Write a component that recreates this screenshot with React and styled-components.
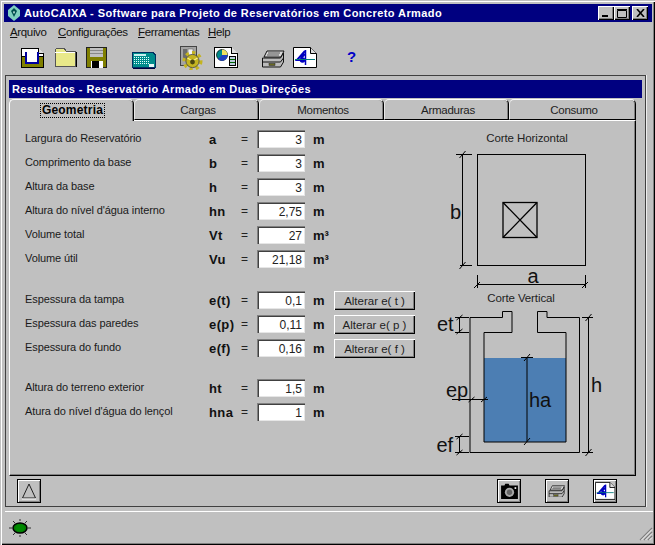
import React from "react";
import styled, { createGlobalStyle } from "styled-components";

const Global = createGlobalStyle`
  html, body { margin: 0; padding: 0; background: #c0c0c0; }
  body { font-family: "Liberation Sans", Arial, sans-serif; font-size: 11px; color: #000; }
`;

const Win = styled.div`
  width: 655px; height: 545px; box-sizing: border-box; padding: 4px 3px 0 4px;
  background: #c0c0c0; overflow: hidden; display: flex; flex-direction: column;
  box-shadow: inset 1px 1px 0 #c0c0c0, inset 2px 2px 0 #fff, inset -1px -1px 0 #000, inset -2px -2px 0 #808080;
`;
const TitleBar = styled.div`
  height: 18px; flex: none; background: #000080; color: #fff; display: flex; align-items: center;
  padding: 0 4px 0 3px; gap: 3px; font-weight: 700; font-size: 11px; letter-spacing: 0.42px;
`;
const TitleText = styled.span`flex: 1; white-space: nowrap;`;
const WinControls = styled.div`display: flex;`;
const WinBtn = styled.div`
  width: 16px; height: 14px; box-sizing: border-box; background: #c0c0c0; display: flex; align-items: center; justify-content: center;
  margin-left: ${p => p.$gap || 0}px;
  box-shadow: inset 1px 1px 0 #fff, inset -1px -1px 0 #000, inset -2px -2px 0 #808080;
`;
const MenuBar = styled.div`height: 20px; flex: none; display: flex; align-items: center; padding-left: 6px; color: #111;`;
const MenuItem = styled.span`
  width: ${p => p.$w}px; white-space: nowrap; font-size: 11.5px; letter-spacing: -0.35px;
  u { text-underline-offset: 1px; }
`;
const ToolBar = styled.div`height: 33px; flex: none; display: flex; align-items: flex-start; padding-top: 3px; box-sizing: border-box;`;
const ToolSlot = styled.div`margin-left: ${p => p.$ml}px; margin-top: ${p => p.$mt || 0}px; display: flex; flex: none;`;
const Help = styled.span`color: #0000c8; font: 700 15px "Liberation Sans", sans-serif; margin-left: 30px; margin-top: 3px;`;

const Workspace = styled.div`
  margin-left: 1px; width: 641px; height: 432px; flex: none; box-sizing: border-box;
  border: 1px solid #404040; box-shadow: 1px 0 0 #eee; padding: 4px 0 0 3px; display: flex; flex-direction: column;
`;
const ChildTitle = styled.div`
  height: 18px; width: 633px; flex: none; background: #000080; color: #fff; display: flex; align-items: center;
  padding-left: 3px; box-sizing: border-box; font-weight: 700; font-size: 11px; letter-spacing: 0.41px; white-space: nowrap;
`;
const Tabs = styled.div`display: flex; margin-top: 1px; height: 21px; flex: none; position: relative; z-index: 1;`;
const Tab = styled.div`
  width: ${p => p.$w}px; box-sizing: border-box; height: ${p => (p.$active ? 22 : 21)}px; flex: none;
  display: flex; align-items: center; justify-content: center; background: #c0c0c0;
  padding-left: ${p => (p.$active ? 2 : 3)}px;
  border-radius: 5px 5px 0 0; font-size: 11.5px; letter-spacing: -0.25px; color: #222;
  border-top: 1px solid #fff; border-left: 1px solid ${p => (p.$active ? "#fff" : "#e8e8e8")};
  border-right: 1px solid #000; border-bottom: ${p => (p.$active ? "0" : "1px solid #000")};
  box-shadow: inset -1px 0 0 #808080;
`;
const TabFocus = styled.span`
  outline: 1px dotted #000; outline-offset: 0; font-weight: 700; font-size: 12px; letter-spacing: 0.2px; color: #000; padding: 0 1px; line-height: 13px;
`;
const Panel = styled.div`
  width: 627px; height: 356px; flex: none; box-sizing: border-box; display: flex; background: #c0c0c0;
  border-top: 1px solid #fff; border-left: 1px solid #fff; border-right: 1px solid #000; border-bottom: 1px solid #000;
  box-shadow: inset -1px -1px 0 #808080;
`;
const Form = styled.div`width: 420px; flex: none; box-sizing: border-box; padding: 9px 0 0 15px; display: flex; flex-direction: column;`;
const Group = styled.div`display: flex; flex-direction: column; gap: 6px; margin-bottom: ${p => p.$mb || 0}px;`;
const Row = styled.div`display: grid; grid-template-columns: 184px 32px 16px 48px 29px 81px; height: 18px; align-items: center;`;
const Label = styled.span`padding-bottom: 3px; font-size: 11px; letter-spacing: -0.1px; white-space: nowrap; color: #1a1a1a;`;
const Sym = styled.span`font-weight: 700; font-size: 13px; letter-spacing: 0.4px; white-space: nowrap; color: #111;`;
const Eq = styled.span`font-size: 12px; color: #222;`;
const Field = styled.input`
  width: 48px; height: 18px; box-sizing: border-box; border: 0; margin: 0; padding: 2px 3px 0 0; text-align: right;
  font: 12px "Liberation Sans", sans-serif; background: #fff; color: #222; outline: none;
  box-shadow: inset 1px 1px 0 #808080, inset 2px 2px 0 #404040, inset -1px -1px 0 #e6e6e6;
`;
const Unit = styled.span`padding-left: 8px; font-weight: 700; font-size: 13px; color: #111;`;
const Btn = styled.button`
  width: 81px; height: 19px; padding: 0; border: 0; background: #c0c0c0; margin: 1px 0 0; font: 11.5px "Liberation Sans", sans-serif; color: #222;
  box-shadow: inset 1px 1px 0 #fff, inset -1px -1px 0 #000, inset -2px -2px 0 #808080;
`;
const Aside = styled.div`flex: 1; padding-top: 10px; display: flex; flex-direction: column; align-items: flex-start;`;
const Caption = styled.div`width: ${p => p.$w}px; height: 14px; line-height: 14px; text-align: center; font-size: 11.5px; letter-spacing: -0.1px; color: #222; white-space: nowrap; margin-top: ${p => p.$mt || 0}px;`;
const Drawing = styled.svg`display: block; flex: none; font-family: "Liberation Sans", sans-serif; margin-top: ${p => p.$mt || 0}px;`;

const Footer = styled.div`height: 30px; width: 627px; flex: none; padding-top: 3px; box-sizing: border-box; display: flex;`;
const FootBtn = styled.div`
  width: 24px; height: 24px; box-sizing: border-box; flex: none; display: flex; align-items: center; justify-content: center;
  margin-left: ${p => p.$ml}px; background: #c0c0c0;
  box-shadow: inset 0 0 0 1px #000, inset 1px 1px 0 1px #fff, inset -1px -1px 0 1px #808080;
`;
const StatusBar = styled.div`
  margin-top: 4px; margin-left: 1px; flex: 1; box-sizing: border-box; border-top: 1px solid #fff; display: flex; align-items: flex-start; justify-content: space-between;
  padding: 6px 0 2px 3px; margin-right: -1px;
`;
const Grip = styled.svg`align-self: flex-end; margin-bottom: 2px;`;

const Minimize = () => <svg width="8" height="8" viewBox="0 0 8 8"><rect x="0" y="6" width="6" height="2" fill="#000"/></svg>;
const Maximize = () => <svg width="10" height="9" viewBox="0 0 10 9"><path d="M.5 1.5h9v7h-9z" fill="none" stroke="#000"/><path d="M0 .5h10" stroke="#000"/></svg>;
const Close = () => <svg width="9" height="8" viewBox="0 0 9 8"><path d="M1 0l7 8M8 0L1 8" stroke="#000" strokeWidth="1.6"/></svg>;
const AppLogo = () => (
  <svg width="14" height="16" viewBox="0 0 14 16"><path d="M7 0l6 5v6l-6 5-6-5V5z" fill="#7fd0c0"/><path d="M7 3l3 3-3 6-3-6z" fill="#005050"/><path d="M7 6l1 1-1 2-1-2z" fill="#d0f0e8"/></svg>
);

const TrayIcon = () => (
  <svg width="24" height="21" viewBox="0 0 24 21" shapeRendering="crispEdges">
    <path d="M1 1h17l5 5v13H1z" fill="#fff" stroke="#000" strokeWidth="1"/>
    <path d="M18 1v5h5" fill="#ddd" stroke="#000"/>
    <path d="M1 9.5h5v6h12v-6h5V20H1z" fill="#808000" stroke="#000"/>
    <path d="M6 5v10.5h12V5" fill="none" stroke="#0000a0" strokeWidth="2"/>
  </svg>
);
const FolderIcon = () => (
  <svg width="23" height="20" viewBox="0 0 23 20" shapeRendering="crispEdges">
    <path d="M1 3l2-2h7l2 3h9.500v15H1z" fill="#e9e98a" stroke="#555"/>
    <path d="M22 5v15H2" fill="none" stroke="#000"/>
    <path d="M1 5h20" stroke="#fff"/>
  </svg>
);
const FloppyIcon = () => (
  <svg width="21" height="21" viewBox="0 0 21 21" shapeRendering="crispEdges">
    <path d="M.5.5h20v20H.5z" fill="#808000" stroke="#222"/>
    <rect x="4" y="1" width="13" height="9" fill="#c0c0c0"/>
    <path d="M4 3.500h13M4 6.500h13" stroke="#888"/>
    <rect x="5" y="14" width="12" height="7" fill="#fff"/>
    <rect x="6" y="14" width="7" height="7" fill="#000"/>
  </svg>
);
const CalcIcon = () => (
  <svg width="25" height="18" viewBox="0 0 25 18" shapeRendering="crispEdges">
    <path d="M2 1.500h20l2 2v13H1V3z" fill="#008c8c" stroke="#003060"/>
    <rect x="3" y="3" width="12" height="2" fill="#c8f0f0"/>
    {[6, 8, 10, 12].map(y => [3, 5, 7, 9, 11, 13, 15, 17].map(x => <rect key={`${x}-${y}`} x={x} y={y} width="1.4" height="1.4" fill="#e6ffff"/>))}
    <rect x="18" y="13" width="5" height="3" fill="#e8f8f8"/>
    <path d="M2 17.500h22" stroke="#000040"/>
  </svg>
);
const GearIcon = () => (
  <svg width="25" height="24" viewBox="0 0 25 24">
    <rect x="0.500" y="0.500" width="16" height="19" fill="#a4a4a4" stroke="#444"/>
    <rect x="8" y="3" width="5" height="13" fill="#f4f4f4" stroke="#666" strokeWidth=".6"/>
    <rect x="3" y="3" width="4" height="10" fill="#6c6c6c"/>
    <circle cx="12.500" cy="15" r="8.300" fill="none" stroke="#c4b420" strokeWidth="3.400" strokeDasharray="3.200 3.200"/>
    <circle cx="12.500" cy="15" r="6.600" fill="#c4b420" stroke="#444" strokeWidth=".8"/>
    <path d="M7.500 12l5 3 5-3" stroke="#f6f08a" strokeWidth="1.400" fill="none"/>
    <circle cx="12.500" cy="16" r="2.400" fill="#4a4610"/>
  </svg>
);
const ChartDocIcon = () => (
  <svg width="24" height="21" viewBox="0 0 24 21" shapeRendering="crispEdges">
    <path d="M.5.5h17l6 6v14H.5z" fill="#fff" stroke="#000"/>
    <path d="M17.500.5v6h6" fill="#ddd" stroke="#000"/>
    <g shapeRendering="auto">
      <circle cx="8" cy="8" r="5.500" fill="#008888" stroke="#000" strokeWidth=".7"/>
      <path d="M8 8V2.500A5.500 5.500 0 0 1 13.500 8z" fill="#f0e060"/>
      <path d="M8 8h5.500A5.500 5.500 0 0 1 4 12z" fill="#2040c0"/>
    </g>
    <rect x="15.500" y="9.500" width="6" height="9" fill="#bcd" stroke="#000"/>
    <path d="M16 12.500h5M16 15.500h5" stroke="#060"/>
  </svg>
);
const PrinterIcon = ({ s = 1 }) => (
  <svg width={24 * s} height={18 * s} viewBox="0 0 24 18">
    <path d="M6 1h17l-3 6H3z" fill="#d8d8d8" stroke="#111"/>
    <path d="M7 3h12M6 5h12" stroke="#333" strokeWidth=".8"/>
    <path d="M1.500 8h18l3-5v9l-3 5h-18z" fill="#bbb" stroke="#111"/>
    <path d="M1.500 12h18l3-4" fill="none" stroke="#111"/>
    <rect x="8" y="13.500" width="6" height="2" fill="#6a6a20" stroke="#222" strokeWidth=".5"/>
  </svg>
);
const DrawDocIcon = ({ s = 1 }) => (
  <svg width={24 * s} height={21 * s} viewBox="0 0 24 21">
    <path d="M.5.5h17l6 6v14H.5z" fill="#fff" stroke="#000"/>
    <path d="M17.500.5v6h6" fill="#ddd" stroke="#000"/>
    <path d="M12.500 3v15" stroke="#0000c0" strokeWidth="1.500"/>
    <path d="M12 4L4 13h8.500M8 11l4-4" fill="none" stroke="#0000c0" strokeWidth="2"/>
    <circle cx="9.500" cy="13" r="2.800" fill="#0000c0"/>
    <path d="M2 12.500h20" stroke="#007878"/>
  </svg>
);
const TriangleIcon = () => (
  <svg width="16" height="17" viewBox="0 0 16 17"><path d="M8 1L1.500 15h13z" fill="none" stroke="#222"/><path d="M1 16h14" stroke="#fff"/></svg>
);
const CameraIcon = () => (
  <svg width="17" height="16" viewBox="0 0 20 19">
    <path d="M0 3h4l1-2h4l1 2h10v16H0z" fill="#000"/>
    <circle cx="10" cy="11" r="5.500" fill="#a8a8a8"/>
    <circle cx="10" cy="11" r="3.200" fill="#666"/>
    <rect x="16" y="5" width="2" height="2" fill="#fff"/>
  </svg>
);
const Led = () => (
  <svg width="24" height="20" viewBox="0 0 24 20">
    <path d="M1 10h3M20 10h3M12 1v2M12 17v2M5 3l2 2M19 3l-2 2M5 17l2-2M19 17l-2-2" stroke="#222" strokeWidth=".9"/>
    <ellipse cx="12" cy="10" rx="7" ry="5" fill="#007a00" stroke="#000" strokeWidth="1.500"/>
    <ellipse cx="12" cy="10" rx="4.500" ry="3.500" fill="#008a00"/>
  </svg>
);

const L = ({ d, w = 1 }) => <path d={d} fill="none" stroke="#000" strokeWidth={w}/>;

const HorizontalCut = () => (
  <Drawing $mt={5} width="200" height="140" viewBox="430 150 200 140">
    <rect x="477.500" y="154.500" width="108" height="111" fill="none" stroke="#000" strokeWidth="1"/>
    <rect x="503" y="202.500" width="34" height="35" fill="none" stroke="#000" strokeWidth="1.300"/>
    <L d="M503 202.500l34 35M537 202.500l-34 35" w={1.300}/>
    <L d="M462.500 154v112M456 154.500h16M460 265.500h12M459.500 158l6-7M459.500 269l6-7"/>
    <L d="M477 284.500h109M477.500 275v13M585.500 275v13M474 288l6-6M582 288l6-6"/>
    <text x="450" y="219" fontSize="20" fill="#111">b</text>
    <text x="527.500" y="283" fontSize="20" fill="#111">a</text>
  </Drawing>
);
const VerticalCut = () => (
  <Drawing width="200" height="155" viewBox="430 305 200 155">
    <rect x="484" y="358" width="82" height="84" fill="#4c7eb3"/>
    <L d="M470 317.500h32.500v-6h9.500v21h-28v109.500h82V332.500h-28.500v-21h9.500v6h32.500v135H470z"/>
    <L d="M527 357.500v84M521 357.500h12M524 361l6-7M524 445l6-7"/>
    <L d="M588.500 317v135M582 317.500h11M582 452.500h11M585.500 321l6-7M585.500 456l6-7"/>
    <L d="M459.500 317v15M455 317.500h14M455 332.500h14M456.500 334l6-5M456.500 320l6-5"/>
    <L d="M459.500 436v16M455 436.500h14M455 452.500h14M456.500 455l6-5M456.500 439l6-5"/>
    <L d="M452 399.500h36M468.500 402l6-5M481 402l6-5"/>
    <text x="437" y="331" fontSize="20" fill="#111">et</text>
    <text x="436.500" y="452" fontSize="20" fill="#111">ef</text>
    <text x="446" y="397" fontSize="20" fill="#111">ep</text>
    <text x="529" y="407" fontSize="20" fill="#111">ha</text>
    <text x="591" y="392" fontSize="20" fill="#111">h</text>
  </Drawing>
);

const g1 = [
  ["Largura do Reservatório", "a", "3", "m"],
  ["Comprimento da base", "b", "3", "m"],
  ["Altura da base", "h", "3", "m"],
  ["Altura do nível d'água interno", "hn", "2,75", "m"],
  ["Volume total", "Vt", "27", "m³"],
  ["Volume útil", "Vu", "21,18", "m³"],
];
const g2 = [
  ["Espessura da tampa", "e(t)", "0,1", "m", "Alterar e( t )"],
  ["Espessura das paredes", "e(p)", "0,11", "m", "Alterar e( p )"],
  ["Espessura do fundo", "e(f)", "0,16", "m", "Alterar e( f )"],
];
const g3 = [
  ["Altura do terreno exterior", "ht", "1,5", "m"],
  ["Atura do nível d'água do lençol", "hna", "1", "m"],
];

const Rows = ({ data, mb }) => (
  <Group $mb={mb}>
    {data.map(([label, sym, val, unit, btn]) => (
      <Row key={label}>
        <Label>{label}</Label>
        <Sym>{sym}</Sym>
        <Eq>=</Eq>
        <Field readOnly value={val}/>
        <Unit>{unit}</Unit>
        {btn && <Btn>{btn}</Btn>}
      </Row>
    ))}
  </Group>
);

export default function App() {
  return (
    <Win>
      <Global/>
      <TitleBar>
        <AppLogo/>
        <TitleText>AutoCAIXA - Software para Projeto de Reservatórios em Concreto Armado</TitleText>
        <WinControls>
          <WinBtn><Minimize/></WinBtn>
          <WinBtn><Maximize/></WinBtn>
          <WinBtn $gap={2}><Close/></WinBtn>
        </WinControls>
      </TitleBar>
      <MenuBar>
        <MenuItem $w={48}><u>A</u>rquivo</MenuItem>
        <MenuItem $w={80}><u>C</u>onfigurações</MenuItem>
        <MenuItem $w={70}><u>F</u>erramentas</MenuItem>
        <MenuItem $w={40}><u>H</u>elp</MenuItem>
      </MenuBar>
      <ToolBar>
        <ToolSlot $ml={16} $mt={2}><TrayIcon/></ToolSlot>
        <ToolSlot $ml={10} $mt={2}><FolderIcon/></ToolSlot>
        <ToolSlot $ml={9} $mt={2}><FloppyIcon/></ToolSlot>
        <ToolSlot $ml={24} $mt={6}><CalcIcon/></ToolSlot>
        <ToolSlot $ml={24} $mt={1}><GearIcon/></ToolSlot>
        <ToolSlot $ml={9} $mt={2}><ChartDocIcon/></ToolSlot>
        <ToolSlot $ml={23} $mt={5}><PrinterIcon/></ToolSlot>
        <ToolSlot $ml={8} $mt={2}><DrawDocIcon/></ToolSlot>
        <Help>?</Help>
      </ToolBar>
      <Workspace>
        <ChildTitle>Resultados - Reservatório Armado em Duas Direções</ChildTitle>
        <Tabs>
          <Tab $w={125} $active><TabFocus>Geometria</TabFocus></Tab>
          <Tab $w={125}>Cargas</Tab>
          <Tab $w={125}>Momentos</Tab>
          <Tab $w={125}>Armaduras</Tab>
          <Tab $w={127}>Consumo</Tab>
        </Tabs>
        <Panel>
          <Form>
            <Rows data={g1} mb={22}/>
            <Rows data={g2} mb={23}/>
            <Rows data={g3}/>
          </Form>
          <Aside>
            <Caption $w={194}>Corte Horizontal</Caption>
            <HorizontalCut/>
            <Caption $w={182} $mt={1}>Corte Vertical</Caption>
            <VerticalCut/>
          </Aside>
        </Panel>
        <Footer>
          <FootBtn $ml={8}><TriangleIcon/></FootBtn>
          <FootBtn $ml={456}><CameraIcon/></FootBtn>
          <FootBtn $ml={24}><PrinterIcon s={0.72}/></FootBtn>
          <FootBtn $ml={24}><DrawDocIcon s={0.85}/></FootBtn>
        </Footer>
      </Workspace>
      <StatusBar>
        <Led/>
        <Grip width="14" height="14" viewBox="0 0 14 14">
          <path d="M1 13L13 1M5 13l8-8M9 13l4-4" stroke="#808080" strokeWidth="1.200"/>
          <path d="M2.500 13L13 2.500M6.500 13l6.500-6.500M10.500 13l2.500-2.500" stroke="#fff" strokeWidth=".8"/>
        </Grip>
      </StatusBar>
    </Win>
  );
}
